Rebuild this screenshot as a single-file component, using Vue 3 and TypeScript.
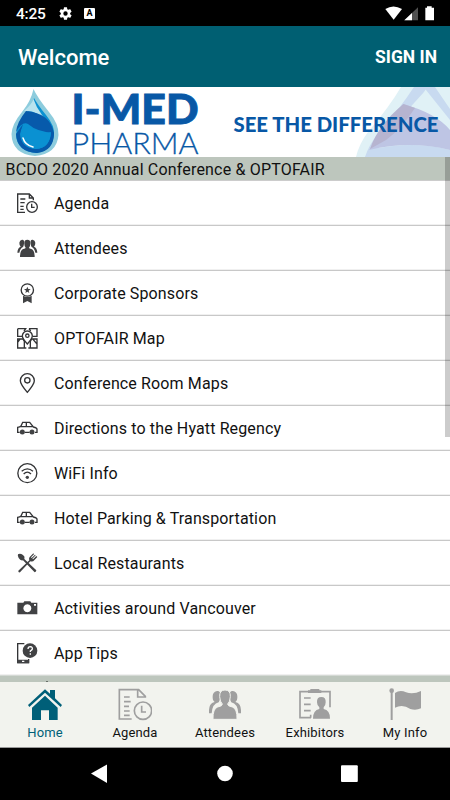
<script setup lang="ts">
import { ref } from 'vue'

type IconName =
  | 'agenda' | 'people' | 'medal' | 'map' | 'pin' | 'car'
  | 'wifi' | 'food' | 'camera' | 'tips'

interface MenuItem {
  label: string
  icon: IconName
}

const items: MenuItem[] = [
  { label: 'Agenda', icon: 'agenda' },
  { label: 'Attendees', icon: 'people' },
  { label: 'Corporate Sponsors', icon: 'medal' },
  { label: 'OPTOFAIR Map', icon: 'map' },
  { label: 'Conference Room Maps', icon: 'pin' },
  { label: 'Directions to the Hyatt Regency', icon: 'car' },
  { label: 'WiFi Info', icon: 'wifi' },
  { label: 'Hotel Parking & Transportation', icon: 'car' },
  { label: 'Local Restaurants', icon: 'food' },
  { label: 'Activities around Vancouver', icon: 'camera' },
  { label: 'App Tips', icon: 'tips' },
]

const tabs = ['Home', 'Agenda', 'Attendees', 'Exhibitors', 'My Info']
const active = ref('Home')
</script>

<template>
  <div class="phone">
    <div class="status">
      <span class="time">4:25</span>
      <svg class="gear" viewBox="0 0 24 24"><path fill="#fff" d="M19.4 13a7.500 7.500 0 0 0 0-2l2.100-1.650a.5.5 0 0 0 .12-.64l-2-3.460a.5.5 0 0 0-.61-.22l-2.490 1a7.300 7.300 0 0 0-1.690-.98l-.38-2.650A.49.49 0 0 0 14 2h-4a.49.49 0 0 0-.49.42l-.38 2.650c-.61.25-1.170.59-1.690.98l-2.490-1a.5.5 0 0 0-.61.22l-2 3.460a.5.5 0 0 0 .12.64L4.570 11a7.900 7.900 0 0 0 0 2l-2.110 1.650a.5.5 0 0 0-.12.64l2 3.460c.12.22.39.3.61.22l2.490-1c.52.4 1.080.73 1.690.98l.38 2.650c.03.24.24.42.49.42h4c.25 0 .46-.18.49-.42l.38-2.650c.61-.25 1.170-.59 1.690-.98l2.490 1c.23.09.49 0 .61-.22l2-3.460a.5.5 0 0 0-.12-.64zM12 15.500a3.500 3.500 0 1 1 0-7 3.500 3.500 0 0 1 0 7z" /></svg>
      <span class="badge">A</span>
      <svg class="signals" viewBox="0 0 150 45">
        <path fill="#fff" d="M1 9Q25-6 51 9L26 41Z" />
        <path fill="#505050" d="M99 4V43H58Z" />
        <path fill="#fff" d="M81 21V43H58Z" />
        <path fill="#fff" d="M121 5h5V1h14v4h7v38h-26Z" />
      </svg>
    </div>

    <header class="bar">
      <h1>Welcome</h1>
      <button class="signin">SIGN IN</button>
    </header>

    <svg class="banner" viewBox="0 0 450 70">
      <path fill="#e0f1f6" d="M401 0H450V70H356Q359 57 368 45Q390 19 401 0Z" />
      <path fill="#c8daf0" d="M414 0H427L424 5L405 26L372 70H365Q369 58 377 48Q401 20 414 0Z" />
      <path fill="#c8daf0" d="M422 0H435L450 22V33L426 3Z" />
      <path fill="#c8daf0" d="M369 63Q413 53 450 63V70H366Z" />
      <path fill="#bec5e4" d="M403 17Q436 26 450 43V63Q410 53 369 63Z" />
      <path fill="#b6b4d0" d="M403.500 17L415 21Q402 41 386 53L370 62Q378 38 403.500 17Z" />
      <path fill="#8dccdd" d="M33.500 2Q37 10 49 25Q59 37 58.500 48Q57 67 35 69Q12 67 11.500 47Q12 37 22 25Q31 14 33.500 2Z" />
      <path fill="#0a91d2" d="M34 11Q37 17 46 28Q55 39 54 48Q52 64 36 66Q17 64 16 48Q17 37 25 28Q33 18 34 11Z" />
      <path fill="#b9e3ee" d="M33.500 12Q36 20 42 28L48 37Q39 23 24 24Q32 17 33.500 12Z" />
      <path fill="#075aab" d="M26 24Q50 26 54 46Q37 45 28 37Q22 34 16 45Q17 35 26 24Z" />
      <path fill="#075aab" d="M16 47Q17 65 37 66Q54 64 54 46L51 43Q51 61 36 62Q21 61 20 47L23 37Z" />
      <path fill="#0a91d2" d="M21 43Q27 37 36 43Q44 48 51 45Q50 61 36 62Q21 60 21 43Z" />
      <path fill="none" stroke="#fff" stroke-width="1.500" stroke-linecap="round" d="M23 51Q25 58 33 60" />
      <text class="brand" x="71.500" y="36.500" textLength="127" lengthAdjust="spacingAndGlyphs">I-MED</text>
      <text class="brand-sub" x="71.500" y="66.500" textLength="127" lengthAdjust="spacingAndGlyphs">PHARMA</text>
      <text class="slogan" x="233.500" y="45" textLength="205" lengthAdjust="spacingAndGlyphs">SEE THE DIFFERENCE</text>
    </svg>

    <main class="content">
      <h2>BCDO 2020 Annual Conference &amp; OPTOFAIR</h2>
      <ul>
        <li v-for="item in items" :key="item.label">
          <svg class="icon" viewBox="0 0 63 63">
            <g v-if="item.icon === 'agenda'" class="line">
              <path d="M24 58H2V3H37L49 15V22M37 3V15H49M10 18H25M10 29H23M10 40H20M10 49H20" />
              <circle cx="45" cy="42" r="16" /><path d="M44 32V43H53" />
            </g>
            <g v-else-if="item.icon === 'people'">
              <path d="M15 5Q23 4 21 17Q20 24 18 27Q10 30 7 44H1Q2 29 11 26Q7 23 7 14Q8 6 15 5ZM47 5Q39 4 41 17Q42 24 44 27Q52 30 55 44H61Q60 29 51 26Q55 23 55 14Q54 6 47 5Z" />
              <path d="M31 5Q41 5 40 17Q40 25 36 29Q36 32 43 33Q53 36 53 57H9Q9 36 19 33Q26 32 26 29Q22 25 22 17Q21 5 31 5Z" />
            </g>
            <g v-else-if="item.icon === 'medal'">
              <circle class="line" cx="31" cy="21" r="18.500" />
              <path d="M31 11L34 18H41L35 23L37 30L31 26L25 30L27 23L21 18H28ZM18 38Q31 46 44 38V61L31 54L18 61Z" />
            </g>
            <g v-else-if="item.icon === 'map'" class="line">
              <path d="M2 2H26L21 9M2 2V25H15M36 2H60V25H47M36 2L41 9M2 33H18L22 40V60H2ZM60 33H44L40 40V60H60ZM22 60H28M34 60H40M2 43L9 33M60 48L48 34" />
              <path d="M31 48Q16 31 16 24A15 15 0 0 1 46 24Q46 31 31 48Z" /><circle cx="31" cy="23" r="5" />
            </g>
            <g v-else-if="item.icon === 'pin'" class="line">
              <path d="M31 58Q10 33 10 23A21 21 0 0 1 52 23Q52 33 31 58Z" /><circle cx="31" cy="22" r="8" />
            </g>
            <g v-else-if="item.icon === 'car'">
              <path class="line" d="M8 43H2V28Q9 27 12 24L17 13H38L49 27Q60 29 60 34V43H54M23 43H38M10 26H49M28 13V26" />
              <circle cx="16" cy="42" r="7.500" /><circle cx="45" cy="42" r="7.500" />
            </g>
            <g v-else-if="item.icon === 'wifi'">
              <g class="line"><circle cx="31" cy="30.500" r="28.500" /><path d="M14 25Q31 10 48 25M20 33Q31 22 42 33" /></g>
              <circle cx="31" cy="43" r="5" />
            </g>
            <g v-else-if="item.icon === 'food'">
              <path d="M3 4Q9 0 18 6Q25 11 22 18L58 52Q58 57 53 58L18 22Q10 24 5 15Q1 8 3 4Z" />
              <path d="M4 53L37 22Q34 14 41 9L49 1L51 4L42 13L44 15L54 5L56 7L46 17L48 19L58 9L61 12L53 20Q47 28 40 25L9 58Q3 59 4 53Z" />
            </g>
            <g v-else-if="item.icon === 'camera'">
              <path fill-rule="evenodd" d="M1 14H19L22 10H40L43 14H61V49H1ZM31 19a12 12 0 1 0 .1 0ZM51 18v5h6v-5Z" />
            </g>
            <g v-else>
              <path class="line" d="M22 2H2V59H35V48" />
              <path fill-rule="evenodd" d="M1 50H36V61H1ZM15 53v4h7v-4Z" />
              <circle cx="39" cy="23" r="22" />
              <path d="M33 18Q33 11 40 11Q47 12 46 18Q45 21 40 24V27M40 31V35" fill="none" stroke="#fff" stroke-width="4" />
            </g>
          </svg>
          <span>{{ item.label }}</span>
        </li>
      </ul>
      <div class="next-band"><i></i></div>
      <i class="thumb"></i>
    </main>

    <nav class="tabs">
      <button v-for="tab in tabs" :key="tab" :class="{ active: tab === active }" @click="active = tab">
        <svg viewBox="0 0 102 102">
          <path v-if="tab === 'Home'" d="M0 51L51 4L66 17V6H81V31L102 51L98 57L51 14L4 57ZM12 59L51 23L89 59V96H63V67H39V96H12Z" />
          <g v-else-if="tab === 'Agenda'" class="outline">
            <path d="M41 93H4V5H62L82 25V29M59 5V27H82M18 27H35M18 41H38M18 55H33M18 69H35M18 82H35" />
            <circle cx="75" cy="68" r="26" /><path d="M71 53V72H84" />
          </g>
          <g v-else-if="tab === 'Attendees'">
            <path d="M24 10Q39 6 37 27Q36 38 32 43Q13 47 11 76H3Q2 55 9 48Q13 43 20 42Q13 37 14 24Q15 13 24 10ZM78 10Q63 6 65 27Q66 38 70 43Q89 47 91 76H99Q100 55 93 48Q89 43 82 42Q89 37 88 24Q87 13 78 10Z" />
            <path stroke="#f2f3ee" stroke-width="3" d="M51 6Q68 6 67 26Q66 42 59 48Q58 54 73 57Q88 62 87 94H15Q14 62 29 57Q44 54 43 48Q36 42 35 26Q34 6 51 6Z" />
          </g>
          <g v-else-if="tab === 'Exhibitors'">
            <path fill="none" stroke="currentColor" stroke-width="5" d="M39 89H6V11H96V58M18 30H38M18 49H38M18 68H38M38 89V80" />
            <path d="M30 7H37V3H64V7H70V15H30ZM70 27Q84 27 83 43Q83 53 77 58V63Q96 66 96 92H45Q45 66 64 63V58Q57 53 57 43Q56 27 70 27Z" />
          </g>
          <g v-else>
            <circle cx="11" cy="8" r="7" /><path d="M8 12H14V96H8ZM21 15Q36 4 54 13Q76 20 99 9V61Q84 68 67 63Q44 47 21 59Z" />
          </g>
        </svg>
        <span>{{ tab }}</span>
      </button>
    </nav>

    <div class="system">
      <svg viewBox="0 0 450 52" fill="#fff">
        <path d="M91 25.500L107 16.500V35Z" /><circle cx="225" cy="25.500" r="7.800" /><rect x="341" y="17.200" width="16.800" height="16.800" rx="1" />
      </svg>
    </div>
  </div>
</template>

<style>
body { margin: 0; background: #000; }
</style>

<style scoped>
.phone { width: 450px; height: 800px; display: flex; flex-direction: column; overflow: hidden; background: #fff; font-family: Roboto, sans-serif; color: #111; }
.status { height: 26px; flex: none; display: flex; align-items: center; background: #000; color: #fff; padding: 0 16px; box-sizing: border-box; }
.time { width: 42px; font-size: 15.500px; font-weight: 500; line-height: 26px; padding-top: 2px; letter-spacing: -0.2px; }
.gear { width: 15px; height: 15px; }
.badge { width: 11px; height: 11px; margin-left: 11px; background: #fff; color: #000; border-radius: 1px; font-size: 9px; line-height: 11px; font-weight: 700; text-align: center; }
.signals { width: 50px; height: 15px; margin-left: auto; margin-right: -1px; }
.bar { height: 61px; flex: none; display: flex; align-items: center; justify-content: space-between; padding: 0 13px 0 18px; background: #005f72; color: #fff; }
h1 { margin: 2px 0 0; font-size: 22px; font-weight: 500; }
button { border: 0; padding: 0; background: none; font-family: inherit; }
.signin { color: #fff; font-size: 17.500px; font-weight: 700; line-height: 20px; }
.banner { width: 450px; height: 70px; flex: none; display: block; background: #fff; font-family: Lato, sans-serif; fill: #0858a6; }
.brand { font-size: 41px; font-weight: 900; stroke: #0858a6; stroke-width: 0.9px; }
.brand-sub { font-size: 28.500px; font-weight: 300; stroke: #0858a6; stroke-width: 0.3px; }
.slogan { font-size: 20.400px; font-weight: 900; }
.content { position: relative; height: 525px; flex: none; overflow: hidden; }
h2 { margin: 0; height: 23px; line-height: 25px; padding-left: 5.500px; background: #bdc6bd; font-size: 16px; font-weight: 400; letter-spacing: 0.18px; white-space: nowrap; }
ul { margin: 0; padding: 0; list-style: none; border-top: 1px solid #ccc; }
li { height: 45px; box-sizing: border-box; border-bottom: 1px solid #c8c8c8; box-shadow: inset 0 -1px #f0f0f0; display: flex; align-items: center; gap: 16px; padding-left: 17px; font-size: 16px; letter-spacing: 0.13px; }
li:last-child { border-bottom-color: #d4d9d4; }
li span { padding-top: 1px; white-space: nowrap; }
.icon { width: 21px; height: 21px; flex: none; fill: #414244; }
.line { fill: none; stroke: #333436; stroke-width: 4; }
.next-band { height: 8px; background: #bdc6bd; }
.next-band i { display: block; width: 2px; height: 1px; margin-left: 46px; background: #697069; transform: translateY(5px); }
.thumb { position: absolute; right: 0; top: 0; width: 5px; height: 280px; background: rgba(0, 0, 0, 0.2); }
.tabs { height: 66px; flex: none; display: grid; grid-template-columns: repeat(5, 1fr); background: #f2f3ee; border-bottom: 1px solid #999; box-sizing: border-box; }
.tabs button { display: flex; flex-direction: column; align-items: center; padding-top: 6px; color: #9f9f9f; }
.tabs svg { width: 34px; height: 34px; fill: currentColor; }
.tabs .outline { fill: none; stroke: currentColor; stroke-width: 5; }
.tabs span { font-size: 13px; line-height: 17px; margin-top: 2px; color: #111; letter-spacing: 0.15px; }
.tabs .active, .tabs .active span { color: #005f78; }
.system { height: 52px; flex: none; background: #000; }
.system svg { display: block; width: 450px; height: 52px; }
</style>
